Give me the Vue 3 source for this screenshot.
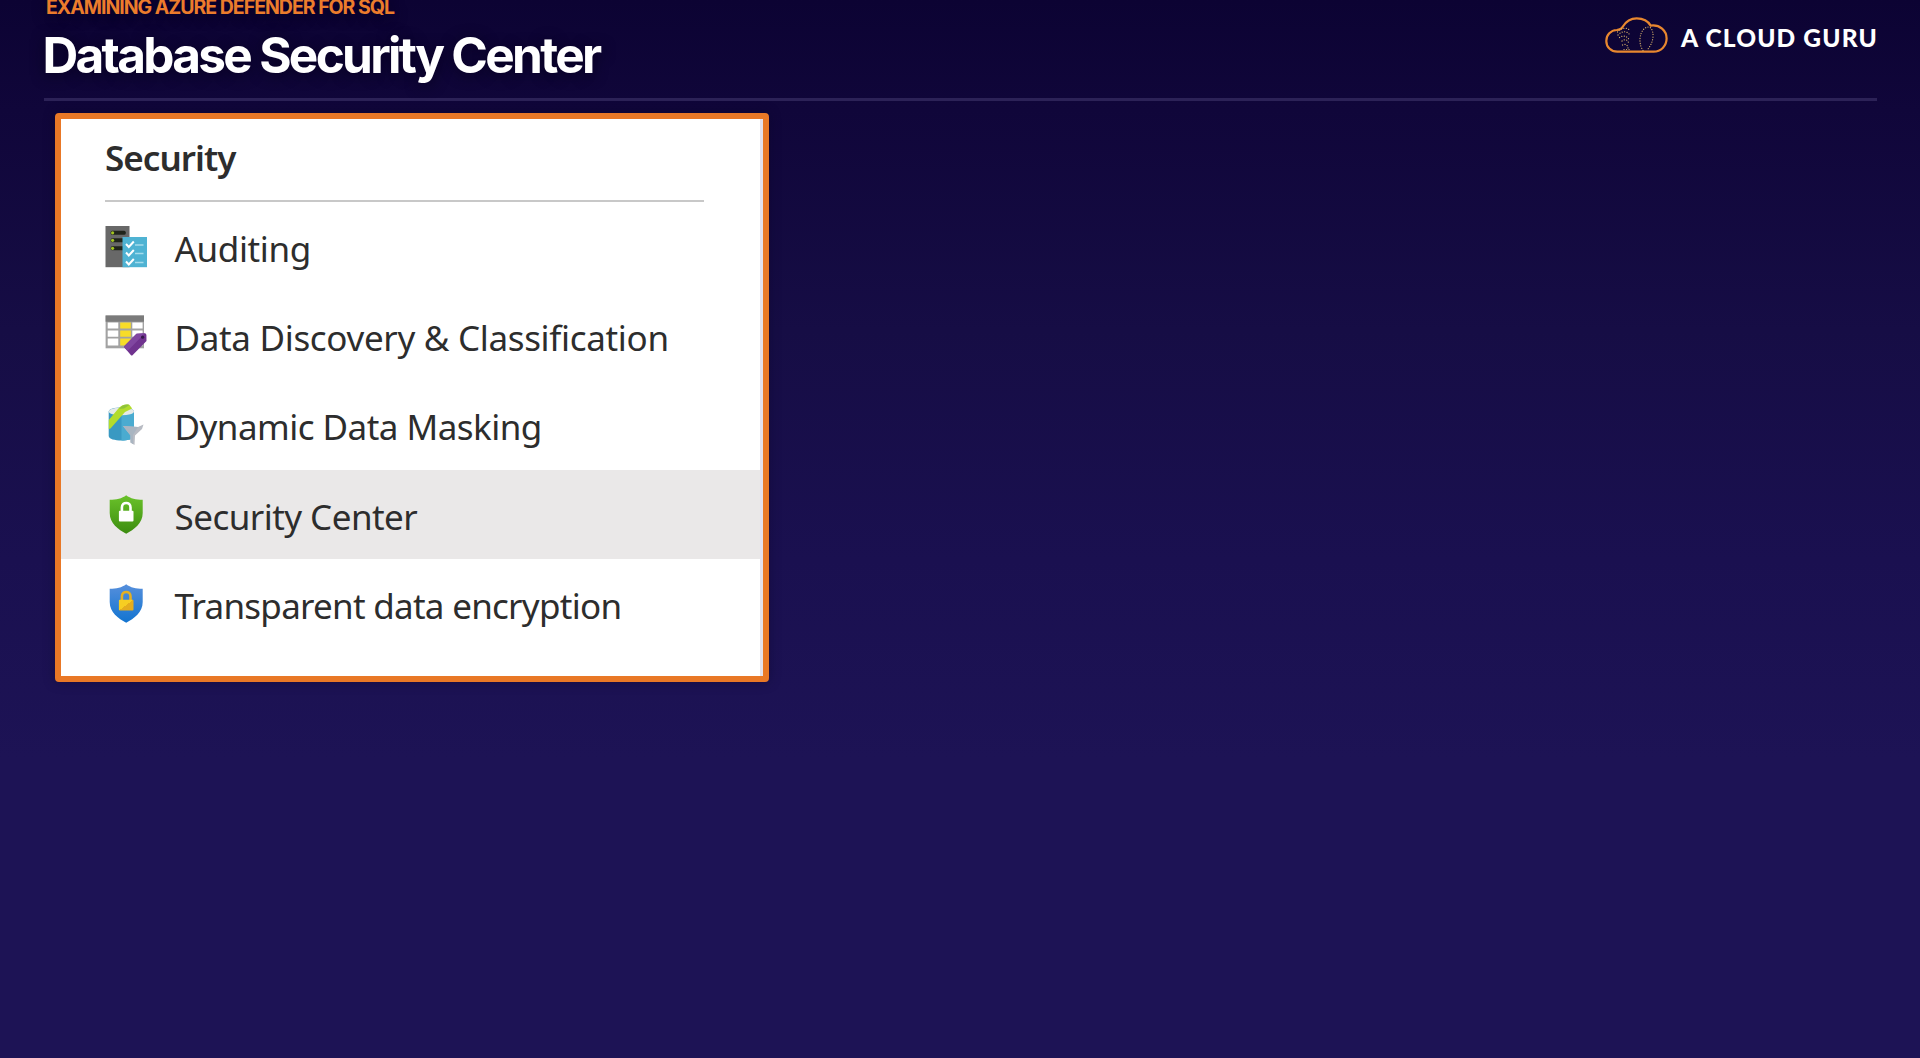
<script setup>
const items = [
  { id: 'auditing', label: 'Auditing', spacing: -0.37 },
  { id: 'classification', label: 'Data Discovery & Classification', spacing: -0.32 },
  { id: 'masking', label: 'Dynamic Data Masking', spacing: -0.53 },
  { id: 'security', label: 'Security Center', spacing: -0.54, active: true },
  { id: 'encryption', label: 'Transparent data encryption', spacing: -0.73 },
]
</script>

<template>
  <div class="slide">
    <header class="header">
      <div class="titles">
        <p class="eyebrow">EXAMINING AZURE DEFENDER FOR SQL</p>
        <h1 class="title">Database Security Center</h1>
      </div>
      <div class="brand">
        <svg class="cloud" width="63" height="37" viewBox="0 0 63 37" fill="none">
          <path
            d="M12.3 34.700C5.800 34.700 1.300 29.800 1.300 23.900C1.300 18 5.800 13.300 11.700 13C14.500 12.700 16.500 12.200 17.700 9.700C21 4.200 26 1.300 31.700 1.300C37.800 1.300 43.200 4.200 45.700 8.600C54.800 7.400 61.600 13.600 61.600 21.600C61.600 29 55.800 34.700 48.600 34.700Z"
            stroke="#e8872f" stroke-width="2.200" stroke-linejoin="round" />
          <g stroke="#dcb56c" stroke-width="1.200" stroke-linecap="round" stroke-dasharray="0.1 2.400">
            <path d="M12.500 15C15 11 21 10 24.500 13M13 18C17 13.500 22 14 24.500 17.500M14.500 20.500C18 18 22 19 24 22.500M17 24C20 21.500 23 23 23.500 26M17.500 28C20 26.500 23 28 23 31M19 32.500H26" />
            <path d="M38 33.500C33.500 27 34 16 39.500 11.500C45 7.500 48.500 12 48 20C47.500 26 44.500 30 42 33.500" />
          </g>
        </svg>
        <span class="brand-name">A CLOUD GURU</span>
      </div>
    </header>

    <section class="panel">
      <h2 class="heading">Security</h2>
      <ul class="menu">
        <li v-for="item in items" :key="item.id" class="item" :class="{ active: item.active }">
          <svg v-if="item.id === 'auditing'" class="icon" viewBox="0 0 42 42">
            <rect x=".5" y="0" width="24" height="41.200" fill="#686868" />
            <g fill="#20241a">
              <rect x="5.700" y="4.800" width="15" height="4" rx="1.500" />
              <rect x="5.700" y="12.300" width="15" height="4" rx="1.500" />
              <rect x="5.700" y="20.300" width="15" height="4" rx="1.500" />
            </g>
            <g fill="#a3c520">
              <circle cx="7.600" cy="6.800" r="1.600" />
              <circle cx="7.600" cy="14.300" r="1.600" />
              <circle cx="7.600" cy="22.300" r="1.600" />
            </g>
            <rect x="17.500" y="11" width="24.500" height="30.200" fill="#4fb3d3" />
            <g fill="none" stroke="#fff" stroke-width="2">
              <path d="M21 18l2.800 3 5-5.500M21 26.500l2.800 3 5-5.500M21 35.500l2.800 3 5-5.500" />
            </g>
            <path d="M30 19h8.500M30 27.500h8.500M30 36.500h8.500" stroke="#a5dcec" stroke-width="1.500" />
          </svg>

          <svg v-else-if="item.id === 'classification'" class="icon" viewBox="0 0 42 42">
            <rect x=".6" y=".5" width="38.400" height="32.800" fill="#a2a2a2" />
            <rect x=".6" y=".5" width="38.400" height="6.200" fill="#7b7b7b" />
            <path d="M2.700 7.400h10.600v6.200H2.700zM27.300 7.400h10.300v6.200H27.300zM2.700 15.400h10.600v6.400H2.700zM27.300 15.400h10.300v6.400H27.300zM2.700 23.600h10.600v7H2.700zM27.300 23.600h10.300v7H27.300z" fill="#fff" />
            <path d="M15.200 7.400h10.600v6.200H15.200zM15.200 15.400h10.600v6.400H15.200zM15.200 23.600h10.600v7H15.200z" fill="#f7dc28" />
            <path d="M31.500 18.700L39.800 18.300Q41.300 18.300 41.400 20L41.500 26L27.500 40.200Q26.700 40.900 26 40.200L19.200 32.300Q18.800 31.600 19.400 31Z" fill="#70338f" />
            <path d="M31.500 18.700L39.800 18.300L22.500 36L19.200 32.300Q18.800 31.600 19.400 31Z" fill="#8046a0" />
            <circle cx="37.600" cy="22.200" r="1.600" fill="#35194a" />
          </svg>

          <svg v-else-if="item.id === 'masking'" class="icon" viewBox="0 0 42 42">
            <path d="M3.700 7.500C3.700 2 29 2 29 7.500V32C29 38 3.700 38 3.700 32Z" fill="#3999c2" />
            <path d="M16.500 8H29V32C29 35 23 36.500 16.500 36.500Z" fill="#4aabd0" />
            <ellipse cx="16.400" cy="7.400" rx="12.600" ry="3.900" fill="#e5e9e7" />
            <path d="M3.800 25V16L13 5C16 1 21 -.2 24.500 1L27.200 4.500L20 8L5.500 24.500Z" fill="#b2dc2c" />
            <path d="M14 5C17 1 21 -.2 24.500 1L19 4.500Z" fill="#8fc33b" />
            <path d="M18 22L33 23L38.500 20.500L37 25L30 31.500L29.500 41L25.500 38.500V31.500Z" fill="#b8bbc3" />
            <path d="M18 22L33 23L28 31V40L25.500 38.500V31.500Z" fill="#a9b5c1" />
          </svg>

          <svg v-else class="icon" viewBox="0 0 42 42">
            <defs>
              <linearGradient :id="`shield-${item.id}`" x1="0" y1="0" x2="0" y2="1">
                <stop offset="0" :stop-color="item.active ? '#6ac22a' : '#568fdc'" />
                <stop offset="1" :stop-color="item.active ? '#3c8c10' : '#1274d0'" />
              </linearGradient>
              <linearGradient :id="`gold-${item.id}`" x1="0" y1="0" x2="1" y2="1">
                <stop offset=".5" stop-color="#f7ce22" />
                <stop offset=".5" stop-color="#e5ad1e" />
              </linearGradient>
            </defs>
            <path d="M21.200 1.200C25.500 4.600 31 5.600 37.700 5.700V19C37.700 29.500 29 35.500 21.200 39.800C13.400 35.500 4.700 29.500 4.700 19V5.700C11.400 5.600 16.900 4.600 21.200 1.200Z" :fill="`url(#shield-${item.id})`" />
            <path d="M16.900 18V13.500C16.900 7.400 25.500 7.400 25.500 13.500V18" fill="none" :stroke="item.active ? '#fff' : '#e5b022'" stroke-width="2.600" />
            <rect x="13.900" y="16.700" width="14.600" height="10.800" rx="1" :fill="item.active ? '#fff' : `url(#gold-${item.id})`" />
          </svg>

          <span class="label" :style="{ letterSpacing: item.spacing + 'px' }">{{ item.label }}</span>
        </li>
      </ul>
    </section>
  </div>
</template>

<style>
body {
  margin: 0;
  background: #1e1456;
}
</style>

<style scoped>
.slide {
  box-sizing: border-box;
  height: 1058px;
  padding: 0 43px 0 44px;
  overflow: hidden;
  background: linear-gradient(#0c0333 0, #10063a 110px, #160d45 330px, #1a1050 560px, #1d1355 760px);
}

.header {
  box-sizing: border-box;
  display: flex;
  justify-content: space-between;
  height: 101px;
  border-bottom: 3px solid #2c2257;
}

.eyebrow,
.title {
  margin: 0;
  font-family: Inter, sans-serif;
  font-weight: 700;
  white-space: nowrap;
  text-shadow: 0 2px 14px #08021f;
}

.eyebrow {
  margin: -5px 0 0 2px;
  font-size: 19.5px;
  line-height: 24px;
  letter-spacing: -1.01px;
  color: #ec7c2c;
}

.title {
  margin-top: 6px;
  margin-left: -1.5px;
  font-size: 49.5px;
  line-height: 60px;
  letter-spacing: -2.7px;
  color: #fff;
}

.brand {
  display: flex;
  align-items: flex-start;
  gap: 13px;
  padding-top: 17px;
}

.brand-name {
  margin: 5px -1px 0 0;
  font: 900 24.5px/31px Lato, sans-serif;
  letter-spacing: 1.15px;
  color: #fff;
  white-space: nowrap;
}

.panel {
  box-sizing: border-box;
  width: 714px;
  height: 569px;
  margin: 12px 0 0 11px;
  border: 6px solid #e97826;
  border-radius: 4px;
  background: linear-gradient(#e4e1ed, #e4e1ed) right / 3px 100% no-repeat #fff;
  box-shadow: 0 0 12px rgba(8, 2, 34, 0.35);
  color: #2d2d2d;
  font-family: "Noto Sans", sans-serif;
}

.heading {
  box-sizing: border-box;
  width: 599px;
  height: 83.2px;
  margin: 0 0 0 44px;
  padding-top: 15px;
  border-bottom: 2px solid #c8c8c8;
  font-size: 35px;
  font-weight: 600;
  line-height: 48px;
  letter-spacing: -0.95px;
}

.menu {
  margin: 0;
  padding: 0 3px 0 0;
  list-style: none;
}

.item {
  display: flex;
  align-items: center;
  gap: 27.5px;
  height: 89.3px;
  padding-left: 44px;
}

.item.active {
  background: #eae8e8;
}

.icon {
  flex: none;
  width: 42px;
  height: 42px;
}

.label {
  padding-top: 4px;
  font-size: 35px;
  line-height: 48px;
  white-space: nowrap;
}
</style>
